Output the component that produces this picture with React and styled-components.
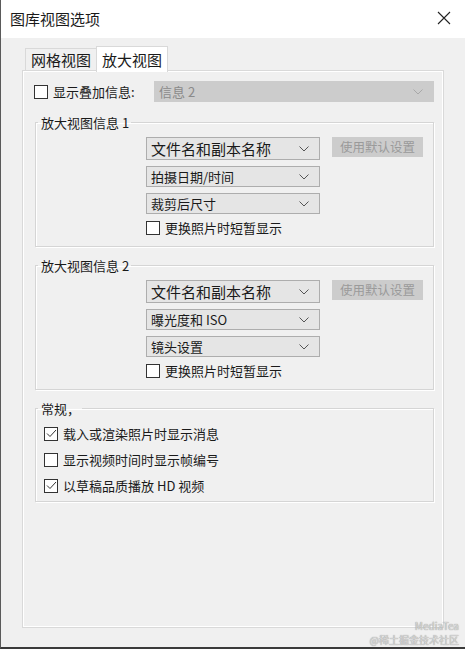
import React from "react"
import styled, { createGlobalStyle } from "styled-components"

const Global = createGlobalStyle`
    html, body {
        margin: 0;
        padding: 0;
        background: #f0f0f0;
    }
    body {
        font-family: "Noto Sans CJK SC", "Noto Sans", sans-serif;
        color: #1a1a1a;
    }
`

const Window = styled.div`
    width: 465px;
    height: 649px;
    box-sizing: border-box;
    background: #f0f0f0;
    border-left: 1px solid #5a5a5a;
    border-bottom: 2px solid #3a3a3a;
    position: relative;
    overflow: hidden;
`

const TitleBar = styled.div`
    height: 38px;
    background: #fff;
    display: flex;
    align-items: center;
    justify-content: space-between;
    padding: 0 14px 0 9px;
`

const Title = styled.div`
    font-size: 15px;
    line-height: 1;
    margin-top: -2px;
`

const Close = styled.svg`
    width: 14px;
    height: 14px;
    margin-top: -2px;
`

const Body = styled.div`
    padding: 8px 21px 0 21px;
`

const Tabs = styled.div`
    display: flex;
    align-items: flex-end;
    padding-left: 3px;
    height: 24px;
`

const Tab = styled.div`
    font-size: 15px;
    line-height: 1;
    box-sizing: border-box;
    border: 1px solid #d9d9d9;
    border-bottom: none;
    padding: 0 5px;
    display: flex;
    align-items: center;
    height: ${p => (p.active ? "26px" : "22px")};
    background: ${p => (p.active ? "#fff" : "#f0f0f0")};
    margin-bottom: ${p => (p.active ? "-2px" : "0")};
    position: relative;
    z-index: 1;
    ${p => (p.active ? "" : "border-right: none;")}
`

const Panel = styled.div`
    height: 558px;
    box-sizing: border-box;
    border: 1px solid #d9d9d9;
    box-shadow: inset 1px 1px 0 #fff, inset -1px -1px 0 #fff;
    padding: 10px 9px 0 11px;
    display: flex;
    flex-direction: column;
`

const OverlayRow = styled.div`
    display: flex;
    align-items: center;
    height: 21px;
    margin-bottom: 14px;
`

const Box = styled.span`
    width: 14px;
    height: 14px;
    box-sizing: border-box;
    border: 1px solid #333;
    background: #fff;
    display: inline-flex;
    align-items: center;
    justify-content: center;
    flex: none;
`

const Label = styled.span`
    font-size: 13px;
    line-height: 1;
    margin-left: 5px;
    white-space: nowrap;
`

const Check = ({ checked }) => (
    <Box>
        {checked && (
            <svg width="11" height="9" viewBox="0 0 11 9">
                <path d="M1 4.5 L4 7.5 L10 1" fill="none" stroke="#333" strokeWidth="1" />
            </svg>
        )}
    </Box>
)

const Chevron = ({ color }) => (
    <svg width="10" height="6" viewBox="0 0 10 6">
        <path d="M0.5 0.5 L5 5 L9.5 0.5" fill="none" stroke={color} strokeWidth="1" />
    </svg>
)

const Select = styled.div`
    box-sizing: border-box;
    height: ${p => (p.big ? "23px" : "21px")};
    width: ${p => (p.wide ? "280px" : "174px")};
    margin-left: ${p => (p.wide ? "auto" : "0")};
    background: ${p => (p.disabled ? "#cccccc" : "#e5e5e5")};
    border: 1px solid ${p => (p.disabled ? "#cccccc" : "#adadad")};
    color: ${p => (p.disabled ? "#8a8a8a" : "#1a1a1a")};
    font-size: ${p => (p.big ? "15px" : "13px")};
    line-height: 1;
    display: flex;
    align-items: center;
    justify-content: space-between;
    padding: 0 10px 0 4px;
    flex: none;
`

const Group = styled.fieldset`
    margin: 0 0 ${p => p.gapAfter}px 1px;
    padding: ${p => p.padTop}px 0 ${p => p.padBottom}px 0;
    border: 1px solid #d5d5d5;
    box-shadow: inset 1px 1px 0 #fff, 1px 1px 0 #fff;
`

const GroupBody = styled.div`
    display: flex;
    flex-direction: column;
    gap: ${p => p.gap}px;
    padding-left: ${p => p.indent}px;
`

const Legend = styled.legend`
    font-size: 13px;
    line-height: 1;
    padding: 0 2px 0 3px;
    margin-left: 2px;
`

const SelectRow = styled.div`
    display: flex;
    align-items: flex-start;
`

const DefaultBtn = styled.div`
    margin-left: 12px;
    width: 91px;
    height: 20px;
    background: #cccccc;
    color: #9a9a9a;
    font-size: 12.5px;
    line-height: 1;
    display: flex;
    align-items: center;
    justify-content: center;
`

const CheckRow = styled.div`
    display: flex;
    align-items: center;
    height: 15px;
`

const Watermark = styled.div`
    position: absolute;
    right: 6px;
    bottom: 1px;
    display: flex;
    flex-direction: column;
    align-items: flex-end;
    gap: 2px;
    font-size: 10px;
    line-height: 12px;
    color: #d8d8d8;
    text-shadow: 0 0 1px #777;
`

const InfoGroup = ({ title, rows }) => (
    <Group padTop={8} padBottom={11} gapAfter={12}>
        <Legend>{title}</Legend>
        <GroupBody gap={6} indent={110}>
            <SelectRow>
                <Select big>
                    文件名和副本名称
                    <Chevron color="#555" />
                </Select>
                <DefaultBtn>使用默认设置</DefaultBtn>
            </SelectRow>
            {rows.map(r => (
                <SelectRow key={r}>
                    <Select>
                        {r}
                        <Chevron color="#555" />
                    </Select>
                </SelectRow>
            ))}
            <CheckRow>
                <Check />
                <Label>更换照片时短暂显示</Label>
            </CheckRow>
        </GroupBody>
    </Group>
)

const App = () => (
    <Window>
        <Global />
        <TitleBar>
            <Title>图库视图选项</Title>
            <Close viewBox="0 0 14 14">
                <path d="M1 1 L13 13 M13 1 L1 13" stroke="#222" strokeWidth="1.1" />
            </Close>
        </TitleBar>
        <Body>
            <Tabs>
                <Tab>网格视图</Tab>
                <Tab active>放大视图</Tab>
            </Tabs>
            <Panel>
                <OverlayRow>
                    <Check />
                    <Label>显示叠加信息:</Label>
                    <Select disabled wide>
                        信息 2
                        <Chevron color="#a8a8a8" />
                    </Select>
                </OverlayRow>
                <InfoGroup title="放大视图信息 1" rows={["拍摄日期/时间", "裁剪后尺寸"]} />
                <InfoGroup title="放大视图信息 2" rows={["曝光度和 ISO", "镜头设置"]} />
                <Group padTop={11} padBottom={8} gapAfter={0}>
                    <Legend>常规，</Legend>
                    <GroupBody gap={11} indent={8}>
                        <CheckRow>
                            <Check checked />
                            <Label>载入或渲染照片时显示消息</Label>
                        </CheckRow>
                        <CheckRow>
                            <Check />
                            <Label>显示视频时间时显示帧编号</Label>
                        </CheckRow>
                        <CheckRow>
                            <Check checked />
                            <Label>以草稿品质播放 HD 视频</Label>
                        </CheckRow>
                    </GroupBody>
                </Group>
            </Panel>
        </Body>
        <Watermark>
            <span>MediaTea</span>
            <span>@稀土掘金技术社区</span>
        </Watermark>
    </Window>
)

export default App
